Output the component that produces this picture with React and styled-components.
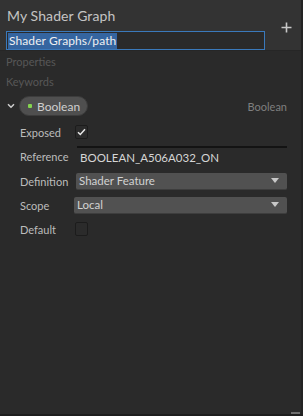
import React from "react";
import styled, { createGlobalStyle } from "styled-components";

const Global = createGlobalStyle`
  html, body { margin: 0; padding: 0; background: #2a2a2a; }
  body { font-family: Lato, "Noto Sans", "Liberation Sans", sans-serif; }
  * { box-sizing: border-box; }
`;

const Panel = styled.div`
  position: relative;
  width: 303px;
  height: 416px;
  background: #2a2a2a;
  border-right: 2px solid #232323;
  border-bottom: 2px solid #1e1e1e;
  display: flex;
  flex-direction: column;
  overflow: hidden;
`;

const Header = styled.div`
  height: 51px;
  background: #333333;
  border-bottom: 1px solid #262626;
  display: flex;
  padding: 6px 0 0 6px;
`;

const HeaderMain = styled.div`
  display: flex;
  flex-direction: column;
  gap: 5px;
`;

const Title = styled.div`
  font-size: 14px;
  line-height: 20px;
  color: #c4c4c4;
  padding-left: 1px;
  letter-spacing: 0.1px;
`;

const PathInput = styled.div`
  width: 259px;
  height: 19px;
  border: 1px solid #3a79bb;
  background: #2a2a2a;
  display: flex;
  align-items: center;
  padding-left: 1px;
`;

const Selected = styled.span`
  background: #3565a0;
  color: #f0f0f0;
  font-size: 12px;
  line-height: 16px;
  padding: 0 1px;
  letter-spacing: 0.1px;
`;

const AddButton = styled.div`
  margin-left: 13px;
  margin-top: 13px;
  width: 16px;
  height: 16px;
  display: flex;
  align-items: center;
  justify-content: center;
`;

const Body = styled.div`
  display: flex;
  flex-direction: column;
  padding-top: 1px;
`;

const Section = styled.div`
  height: 20px;
  line-height: 20px;
  padding-left: 6px;
  font-size: 11px;
  color: #575757;
`;

const PropRow = styled.div`
  display: flex;
  align-items: center;
  height: 20px;
  margin-top: 4px;
  padding-right: 14px;
`;

const Chevron = styled.div`
  width: 19px;
  display: flex;
  justify-content: center;
  padding-left: 2px;
`;

const Pill = styled.div`
  display: flex;
  align-items: center;
  height: 20px;
  width: 69px;
  border-radius: 10px;
  background: #4f4f4f;
  border: 1px solid #3c3c3c;
  padding-left: 8px;
  gap: 5px;
  font-size: 12px;
  color: #cfcfcf;
`;

const Dot = styled.span`
  width: 4px;
  height: 4px;
  background: #84d44f;
  border-radius: 1px;
`;

const TypeLabel = styled.div`
  margin-left: auto;
  font-size: 11px;
  color: #7f7f7f;
`;

const Fields = styled.div`
  display: flex;
  flex-direction: column;
  padding-left: 20px;
  padding-top: 4px;
`;

const Field = styled.div`
  display: flex;
  align-items: center;
  height: ${(p) => p.$h || 24}px;
  padding-right: 14px;
`;

const Label = styled.div`
  width: 54px;
  font-size: 11px;
  color: #bcbcbc;
  flex-shrink: 0;
`;

const Checkbox = styled.div`
  margin-left: 1px;
  width: 13px;
  height: 14px;
  border: 1px solid #1c1c1c;
  background: #2b2b2b;
  border-radius: 2px;
  display: flex;
  align-items: center;
  justify-content: center;
`;

const TextField = styled.div`
  margin-left: ${(p) => p.$indent}px;
  flex: 1;
  height: 20px;
  border-top: 2px solid #131313;
  display: flex;
  align-items: center;
  padding-left: 3px;
  font-size: 11.5px;
  color: #d6d6d6;
`;

const Dropdown = styled.div`
  margin-left: ${(p) => p.$indent}px;
  flex: 1;
  height: 17px;
  background: #515151;
  border-bottom: 1px solid #3d3d3d;
  border-radius: 2px;
  display: flex;
  align-items: center;
  padding: 0 8px 0 3px;
  font-size: 11.5px;
  color: #d2d2d2;
`;

const Arrow = styled.span`
  margin-left: auto;
  width: 0;
  height: 0;
  border-left: 4px solid transparent;
  border-right: 4px solid transparent;
  border-top: 5px solid #c8c8c8;
`;

const ResizeGrip = styled.div`
  position: absolute;
  right: 1px;
  bottom: 0;
  width: 9px;
  height: 2px;
  background: #6e6e6e;
`;

export default function App() {
  return (
    <>
      <Global />
      <Panel>
        <Header>
          <HeaderMain>
            <Title>My Shader Graph</Title>
            <PathInput>
              <Selected>Shader Graphs/path</Selected>
            </PathInput>
          </HeaderMain>
          <AddButton>
            <svg width="11" height="11" viewBox="0 0 11 11">
              <path d="M5.5 0.5v10M0.5 5.5h10" stroke="#c8c8c8" strokeWidth="1.6" />
            </svg>
          </AddButton>
        </Header>
        <Body>
          <Section>Properties</Section>
          <Section>Keywords</Section>
          <PropRow>
            <Chevron>
              <svg width="8" height="6" viewBox="0 0 8 6">
                <path d="M1 1.2l3 3 3-3" stroke="#cfcfcf" strokeWidth="1.5" fill="none" />
              </svg>
            </Chevron>
            <Pill>
              <Dot />
              Boolean
            </Pill>
            <TypeLabel>Boolean</TypeLabel>
          </PropRow>
          <Fields>
            <Field $h={24}>
              <Label>Exposed</Label>
              <Checkbox>
                <svg width="9" height="8" viewBox="0 0 9 8">
                  <path d="M1 4.2l2.3 2.3L8 1.2" stroke="#e6e6e6" strokeWidth="1.5" fill="none" />
                </svg>
              </Checkbox>
            </Field>
            <Field $h={24}>
              <Label>Reference</Label>
              <TextField $indent={3}>BOOLEAN_A506A032_ON</TextField>
            </Field>
            <Field $h={26}>
              <Label>Definition</Label>
              <Dropdown $indent={2}>
                Shader Feature
                <Arrow />
              </Dropdown>
            </Field>
            <Field $h={22}>
              <Label>Scope</Label>
              <Dropdown $indent={0}>
                Local
                <Arrow />
              </Dropdown>
            </Field>
            <Field $h={26}>
              <Label>Default</Label>
              <Checkbox />
            </Field>
          </Fields>
        </Body>
        <ResizeGrip />
      </Panel>
    </>
  );
}
